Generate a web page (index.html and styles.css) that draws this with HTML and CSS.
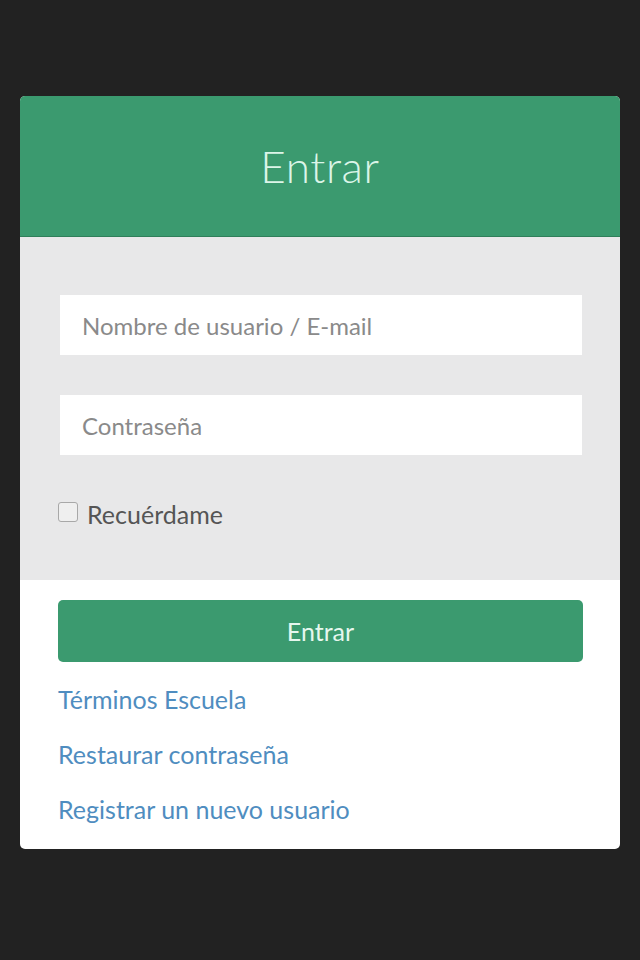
FILE: index.html
```html
<!DOCTYPE html>
<html lang="es">
<head>
<meta charset="utf-8">
<title>Entrar</title>
<link rel="stylesheet" href="styles.css">
</head>
<body>
<div class="card">
  <div class="card-header">
    <h1 class="title">Entrar</h1>
  </div>
  <form class="card-body">
    <input class="field" type="text" placeholder="Nombre de usuario / E-mail">
    <input class="field" type="password" placeholder="Contraseña">
    <label class="remember"><span class="box"></span>Recuérdame</label>
  </form>
  <div class="card-footer">
    <button class="btn" type="button">Entrar</button>
    <nav class="links">
      <a href="#">Términos Escuela</a>
      <a href="#">Restaurar contraseña</a>
      <a href="#">Registrar un nuevo usuario</a>
    </nav>
  </div>
</div>
</body>
</html>
```
FILE: styles.css
```css
html, body {
  margin: 0;
  padding: 0;
  background: #222222;
  font-family: Lato, "Noto Sans", sans-serif;
}
body {
  padding: 96px 20px 0;
  height: 960px;
  box-sizing: border-box;
}
.card {
  background: #ffffff;
  border-radius: 5px;
  overflow: hidden;
}
.card-header {
  background: #3b9a6f;
  height: 141px;
  display: flex;
  align-items: center;
  justify-content: center;
  border-bottom: 1px solid #2f7f5a;
  box-sizing: border-box;
}
.title {
  margin: 0;
  font-weight: 300;
  font-size: 44px;
  color: #dcf5e8;
  letter-spacing: 0.6px;
}
.card-body {
  background: #e8e8e9;
  height: 343px;
  box-sizing: border-box;
  padding: 58px 38px 0 40px;
  display: flex;
  flex-direction: column;
  margin: 0;
}
.field {
  height: 60px;
  border: none;
  background: #ffffff;
  font-family: inherit;
  font-size: 24px;
  padding: 0 22px;
  margin: 0 0 40px;
  outline: none;
  box-sizing: border-box;
  width: 100%;
}
.field::placeholder {
  color: #8a8a8a;
}
.field + .field {
  margin-bottom: 44px;
}
.remember {
  display: flex;
  align-items: center;
  font-size: 25px;
  color: #555555;
  margin-left: -2px;
}
.box {
  width: 20px;
  height: 20px;
  border: 1px solid #a8a8a8;
  border-radius: 3px;
  background: #efefef;
  margin-right: 9px;
  margin-top: -4px;
  box-sizing: border-box;
}
.card-footer {
  padding: 20px 37px 12px 38px;
}
.btn {
  display: block;
  width: 100%;
  height: 62px;
  border: none;
  border-radius: 5px;
  background: #3b9a6f;
  color: #e6f7ee;
  font-family: inherit;
  font-size: 25px;
  cursor: pointer;
}
.links {
  display: flex;
  flex-direction: column;
  margin-top: 10px;
}
.links a {
  font-size: 25px;
  line-height: 55px;
  color: #4f8dc0;
  text-decoration: none;
  width: max-content;
}
```
